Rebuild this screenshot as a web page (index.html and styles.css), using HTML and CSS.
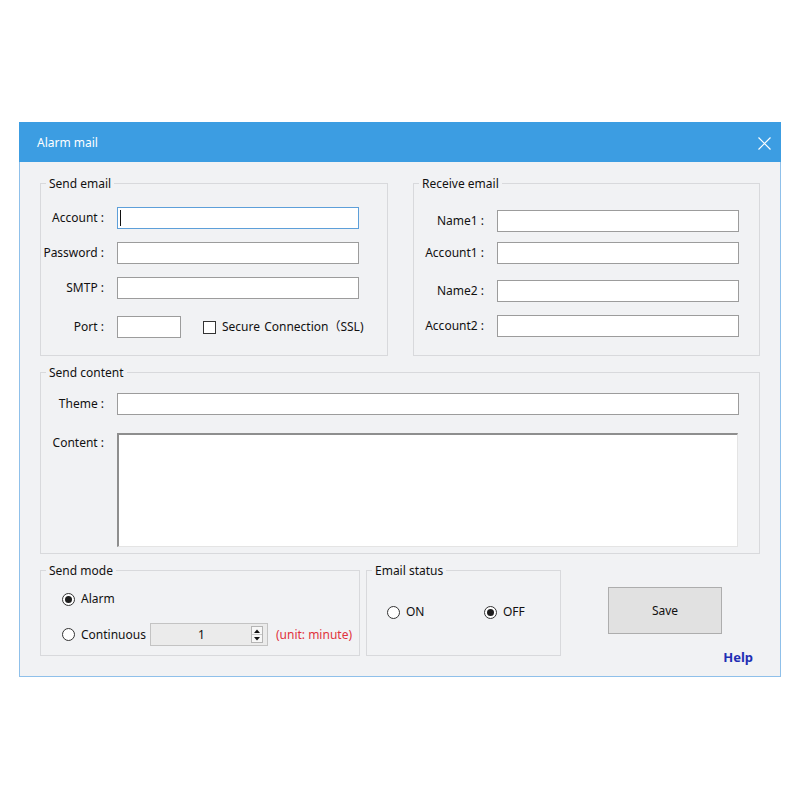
FILE: index.html
```html
<!DOCTYPE html>
<html lang="en">
<head>
<meta charset="utf-8">
<title>Alarm mail</title>
<link rel="stylesheet" href="styles.css">
</head>
<body>
<div class="window">
  <div class="titlebar">
    <span class="title">Alarm mail</span>
    <svg class="close" width="13" height="13" viewBox="0 0 13 13" aria-hidden="true">
      <path d="M0.5 0.5 L12.5 12.5 M12.5 0.5 L0.5 12.5" stroke="#fff" stroke-width="1.2" fill="none"/>
    </svg>
  </div>
  <div class="body">
    <div class="row1">
      <fieldset class="group send-email">
        <legend>Send email</legend>
        <div class="frow se1">
          <label class="lbl">Account :</label>
          <span class="field-wrap"><input class="input wide focus" type="text"><span class="caret"></span></span>
        </div>
        <div class="frow se2">
          <label class="lbl">Password :</label>
          <input class="input wide" type="text">
        </div>
        <div class="frow se3">
          <label class="lbl">SMTP :</label>
          <input class="input wide" type="text">
        </div>
        <div class="frow se4">
          <label class="lbl">Port :</label>
          <input class="input port" type="text">
          <span class="checkbox"></span>
          <span class="check-text">Secure Connection（SSL)</span>
        </div>
      </fieldset>
      <fieldset class="group receive-email">
        <legend>Receive email</legend>
        <div class="frow re1">
          <label class="lbl lbl-r">Name1 :</label>
          <input class="input wide" type="text">
        </div>
        <div class="frow re2">
          <label class="lbl lbl-r">Account1 :</label>
          <input class="input wide" type="text">
        </div>
        <div class="frow re3">
          <label class="lbl lbl-r">Name2 :</label>
          <input class="input wide" type="text">
        </div>
        <div class="frow re4">
          <label class="lbl lbl-r">Account2 :</label>
          <input class="input wide" type="text">
        </div>
      </fieldset>
    </div>

    <fieldset class="group send-content">
      <legend>Send content</legend>
      <div class="frow sc1">
        <label class="lbl">Theme :</label>
        <input class="input theme" type="text">
      </div>
      <div class="frow sc2">
        <label class="lbl lbl-top">Content :</label>
        <textarea class="content-area"></textarea>
      </div>
    </fieldset>

    <div class="row3">
      <fieldset class="group send-mode">
        <legend>Send mode</legend>
        <div class="opt alarm-row">
          <span class="radio on"></span><span class="opt-text">Alarm</span>
        </div>
        <div class="opt cont-row">
          <span class="radio"></span><span class="opt-text">Continuous</span>
          <div class="spin">
            <span class="spin-val">1</span>
            <span class="spin-btns">
              <span class="spin-btn"><svg width="6" height="4" viewBox="0 0 6 4"><path d="M0 4 L3 0.5 L6 4 Z" fill="#111"/></svg></span>
              <span class="spin-btn"><svg width="6" height="4" viewBox="0 0 6 4"><path d="M0 0 L3 3.5 L6 0 Z" fill="#111"/></svg></span>
            </span>
          </div>
          <span class="unit">(unit: minute)</span>
        </div>
      </fieldset>
      <fieldset class="group status">
        <legend>Email status</legend>
        <div class="opt status-row">
          <span class="status-item"><span class="radio"></span><span class="opt-text">ON</span></span>
          <span class="status-item"><span class="radio on"></span><span class="opt-text">OFF</span></span>
        </div>
      </fieldset>
      <div class="actions">
        <button class="save" type="button">Save</button>
        <span class="help">Help</span>
      </div>
    </div>
  </div>
</div>
</body>
</html>
```

FILE: styles.css
```css
html, body {
  margin: 0;
  padding: 0;
  background: #ffffff;
}

body {
  font-family: "Noto Sans", "Open Sans", "Noto Sans CJK SC", sans-serif;
  font-size: 12px;
  color: #111111;
}

.window {
  margin: 122px 0 0 19px;
  width: 762px;
}

.titlebar {
  height: 40px;
  background: #3c9de2;
  display: flex;
  align-items: center;
  justify-content: space-between;
  padding: 2px 10px 0 18px;
  box-sizing: border-box;
}

.title {
  color: #ffffff;
  font-size: 12px;
  line-height: 16px;
}

.close {
  display: block;
}

.body {
  background: #f1f2f4;
  border: 1px solid #8fc0ea;
  border-top: none;
  padding: 12px 20px 20px;
  box-sizing: border-box;
  height: 515px;
}

.row1 {
  display: grid;
  grid-template-columns: 348px 347px;
  column-gap: 25px;
}

.group {
  margin: 0;
  padding: 0;
  border: 1px solid #d8d9dc;
  box-sizing: border-box;
  min-width: 0;
}

.group legend {
  margin-left: 5px;
  padding: 1px 3px 0;
  line-height: 17px;
  height: 18px;
  box-sizing: border-box;
  font-size: 12px;
  color: #111111;
}

.send-email,
.receive-email {
  height: 182px;
}

.frow {
  display: flex;
  align-items: center;
  height: 22px;
}

.lbl {
  width: 63px;
  margin-right: 13px;
  text-align: right;
  white-space: nowrap;
  line-height: 18px;
  flex: none;
}

.lbl-r {
  width: 70px;
}

.se1 { margin-top: 15px; }
.se2 { margin-top: 13px; }
.se3 { margin-top: 13px; }
.se4 { margin-top: 17px; }

.re1 { margin-top: 18px; }
.re2 { margin-top: 10px; }
.re3 { margin-top: 16px; }
.re4 { margin-top: 13px; }

.input {
  height: 22px;
  box-sizing: border-box;
  border: 1px solid #9c9c9c;
  background: #ffffff;
  margin: 0;
  padding: 0 3px;
  font: inherit;
  outline: none;
  border-radius: 0;
  flex: none;
}

.wide { width: 242px; }
.port { width: 64px; }
.theme { width: 622px; }

.focus {
  border-color: #5d9fd9;
}

.field-wrap {
  position: relative;
  display: block;
  height: 22px;
}

.caret {
  position: absolute;
  left: 3px;
  top: 3px;
  width: 1px;
  height: 16px;
  background: #111;
}

.checkbox {
  width: 13px;
  height: 13px;
  box-sizing: border-box;
  border: 1px solid #333;
  background: #fff;
  margin-left: 22px;
  flex: none;
}

.check-text {
  margin-left: 6px;
  white-space: nowrap;
  line-height: 18px;
  word-spacing: 1px;
}

.send-content {
  height: 191px;
  margin-top: 7px;
}

.sc1 { margin-top: 12px; }

.sc2 {
  margin-top: 18px;
  height: auto;
  align-items: flex-start;
}

.lbl-top {
  padding-top: 1px;
}

.content-area {
  width: 621px;
  height: 114px;
  box-sizing: border-box;
  margin: 0;
  padding: 0;
  border-top: 2px solid #8e8e8e;
  border-left: 2px solid #8e8e8e;
  border-right: 1px solid #e4e4e4;
  border-bottom: 1px solid #e4e4e4;
  background: #ffffff;
  resize: none;
  overflow: hidden;
  outline: none;
  font: inherit;
  display: block;
}

.row3 {
  display: flex;
  height: 95px;
  margin-top: 7px;
}

.send-mode {
  width: 320px;
  height: 95px;
  flex: none;
  padding-left: 21px;
}

.send-mode legend {
  margin-left: -16px;
}

.status {
  width: 195px;
  height: 95px;
  flex: none;
  margin-left: 6px;
  padding-left: 20px;
}

.status legend {
  margin-left: -15px;
}

.opt {
  display: flex;
  align-items: center;
}

.alarm-row {
  margin-top: 11px;
  height: 18px;
}

.cont-row {
  margin-top: 15px;
  height: 23px;
}

.status-row {
  margin-top: 24px;
  height: 18px;
}

.status-item {
  display: flex;
  align-items: center;
  width: 97px;
  flex: none;
}

.radio {
  width: 13px;
  height: 13px;
  box-sizing: border-box;
  border: 1px solid #333;
  border-radius: 50%;
  background: #fff;
  display: inline-flex;
  align-items: center;
  justify-content: center;
  flex: none;
}

.radio.on::after {
  content: "";
  width: 7px;
  height: 7px;
  border-radius: 50%;
  background: #1e1e1e;
}

.opt-text {
  margin-left: 6px;
  line-height: 18px;
  white-space: nowrap;
}

.spin {
  margin-left: 4px;
  width: 118px;
  height: 23px;
  box-sizing: border-box;
  border: 1px solid #c3c3c3;
  background: #ebebeb;
  display: flex;
  align-items: center;
  flex: none;
}

.spin-val {
  flex: 1;
  text-align: center;
  line-height: 18px;
  padding-left: 1px;
}

.spin-btns {
  width: 12px;
  height: 17px;
  margin-right: 4px;
  display: flex;
  flex-direction: column;
  border: 1px solid #b5b5b5;
  box-sizing: border-box;
  background: #f7f7f7;
}

.spin-btn {
  flex: 1;
  display: flex;
  align-items: center;
  justify-content: center;
}

.spin-btn + .spin-btn {
  border-top: 1px solid #c9c9c9;
}

.spin-btn svg {
  display: block;
}

.unit {
  margin-left: 8px;
  color: #e0323c;
  white-space: nowrap;
  line-height: 18px;
}

.actions {
  flex: 1;
  display: flex;
  flex-direction: column;
  padding-top: 26px;
}

.save {
  flex: none;
  margin: 0 0 0 47px;
  width: 114px;
  height: 47px;
  background: #e1e1e1;
  border: 1px solid #adadad;
  border-radius: 0;
  font: inherit;
  color: #111111;
  padding: 0;
}

.help {
  flex: none;
  align-self: flex-end;
  margin-right: 7px;
  margin-top: 15px;
  line-height: 16px;
  font-size: 13px;
  font-weight: bold;
  color: #1f2fb4;
}
```
